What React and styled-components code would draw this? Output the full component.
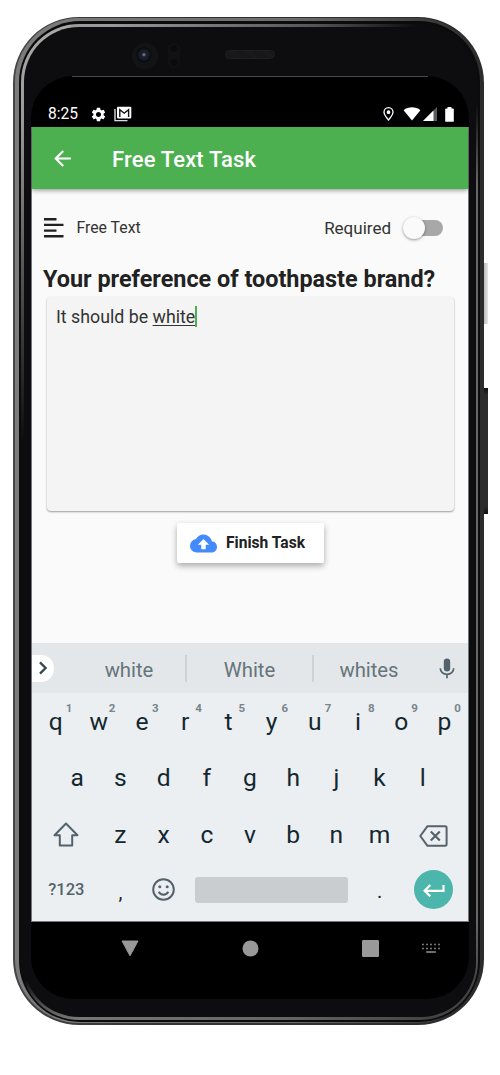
import React from "react";
import styled, { createGlobalStyle } from "styled-components";
import { MdSettings, MdArrowBack, MdBackup } from "react-icons/md";

const GlobalStyle = createGlobalStyle`
  * { box-sizing: border-box; }
  body { margin: 0; background: #fff; font-family: Roboto, "Liberation Sans", sans-serif; }
  svg { display: block; flex: none; }
`;

const Stage = styled.main`
  display: flex;
  align-items: flex-start;
  width: 500px;
  height: 1075px;
  padding: 17px 0 0 13px;
  overflow: hidden;
`;

/* Phone body: concentric shells from the outer rim to the glass */
const Rim = styled.div`
  width: 471px;
  height: 1008px;
  padding: 1px 3px 2px 2px;
  border-radius: 66px;
  background: linear-gradient(to right, #454545, #333 30%, #2c2c2c);
`;
const Metal = styled.div`
  height: 100%;
  padding: 3px 1px 1px 4px;
  border-radius: 64px;
  background: linear-gradient(to right, #7c7c7c, #6c6c6c 60%, #2c2c2c 99%);
`;
const Groove = styled.div`
  height: 100%;
  padding: 3px 2px 2px;
  border-radius: 61px;
  background: #0b0b0b;
`;
const Bevel = styled.div`
  height: 100%;
  padding: 3px 2px 3px 3px;
  border-radius: 58px;
  background:
    linear-gradient(to right, #999 0 10%, #555 60%, #0d0d0f 85%) 50px 0 / 407px 3px no-repeat,
    linear-gradient(to right, #777, #666 60%, #444) 50px 100% / 357px 3px no-repeat,
    linear-gradient(#0d0d0f, #0d0d0f 8%, #666 16%, #666 90%, #444 96%, #444) 100% 0 / 50% 100% no-repeat,
    linear-gradient(#aaa, #999 10%, #555 25%, #0d0d0f 42%, #0d0d0f 96%, #777) 0 0 / 50% 100% no-repeat;
`;
const Glass = styled.div`
  display: flex;
  flex-direction: column;
  height: 100%;
  padding: 0 7px 17px;
  border-radius: 55px;
  background: #0d0d0f;
`;
const SensorBar = styled.div`
  display: flex;
  align-items: center;
  height: 49px;
  padding: 8px 0 0 101px;
`;
const Camera = styled.div`
  width: 26px;
  height: 26px;
  border-radius: 50%;
  background: radial-gradient(circle at 46% 45%, #80808a 0 0.5px, #1f2230 2px, #171924 5px, #0a0a0c 7px, #131315 8px);
`;
const Proximity = styled.div`
  width: 12px;
  height: 25px;
  margin-left: 10px;
  border-radius: 6px;
  background:
    radial-gradient(circle at 50% 22%, #0b0b0c 3px, transparent 4px),
    radial-gradient(circle at 50% 78%, #0b0b0c 3px, transparent 4px),
    #111113;
`;
const Speaker = styled.div`
  width: 50px;
  height: 9px;
  margin: -2px 0 0 45px;
  border: 1px solid #1f1f21;
  border-radius: 5px;
  background: repeating-linear-gradient(45deg, #151515 0 1px, #1b1b1b 1px 2px);
`;
const SideKeys = styled.div`
  display: flex;
  flex-direction: column;
  gap: 64px;
  width: 4px;
  padding-top: 246px;
`;
const SideKey = styled.div`
  height: ${(p) => p.$height}px;
  background: ${(p) => p.$fill};
`;

const Screen = styled.div`
  display: flex;
  flex-direction: column;
  height: 923px;
  border-radius: 42px;
  overflow: hidden;
  background: linear-gradient(#4a4a4a, #4a4a4a) 41px 0 / 356px 1px no-repeat, #000;
`;
const StatusBar = styled.div`
  display: flex;
  align-items: flex-end;
  height: 51px;
  padding: 0 15px 4px 17px;
  color: #fff;
`;
const Clock = styled.span`
  width: 42px;
  font-size: 15.6px;
  line-height: 17px;
`;
const StatusIcons = styled.div`
  display: flex;
  align-items: center;
  height: 18px;
  gap: ${(p) => p.$gap}px;
  margin-left: ${(p) => (p.$end ? "auto" : 0)};
`;

const Window = styled.div`
  display: flex;
  flex-direction: column;
  height: 795px;
  border: solid #777;
  border-width: 0 1px 1px;
`;
const AppBar = styled.header`
  display: flex;
  align-items: center;
  height: 62px;
  flex: none;
  padding: 1px 0 0 18px;
  gap: 37px;
  color: #fff;
  background: #4caf50;
  box-shadow: 0 1px 5px rgba(0, 0, 0, 0.45);
  z-index: 1;
`;
const Title = styled.h1`
  margin: 0;
  padding-top: 1px;
  font-size: 22px;
  font-weight: 500;
  letter-spacing: 0.15px;
`;
const Content = styled.section`
  flex: 1;
  padding: 26px 14px 0 11px;
  background: #fafafa;
`;
const TaskRow = styled.div`
  display: flex;
  align-items: center;
  height: 25px;
  color: #333;
`;
const Label = styled.span`
  font-size: ${(p) => p.$size}px;
  line-height: 24px;
  margin-left: ${(p) => p.$left};
`;
const Switch = styled.div`
  display: flex;
  align-items: center;
  width: 32px;
  height: 16px;
  margin: 0 11px 0 20px;
  border-radius: 8px;
  background: #a8a8a8;
`;
const Thumb = styled.div`
  width: 22px;
  height: 22px;
  flex: none;
  margin-left: -8px;
  border-radius: 50%;
  background: #fafafa;
  box-shadow: 0 1px 3px rgba(0, 0, 0, 0.4);
`;
const Question = styled.h2`
  margin: 24px 0 0;
  font-size: 23.4px;
  line-height: 30px;
  font-weight: 700;
  color: #212121;
  white-space: nowrap;
`;
const Answer = styled.div`
  display: flex;
  align-items: flex-start;
  width: 407px;
  height: 214px;
  margin: 3px 0 0 4px;
  padding: 9px;
  border-radius: 4px;
  background: #f4f4f4;
  box-shadow: 0 1px 2px rgba(0, 0, 0, 0.38);
  font-size: 17.8px;
  line-height: 22px;
  color: #333;
`;
const Composing = styled.span`
  text-decoration: underline;
  text-decoration-thickness: 1px;
  text-underline-offset: 2px;
`;
const Caret = styled.span`
  width: 2px;
  height: 21px;
  background: #4caf50;
`;
const FinishButton = styled.button`
  display: flex;
  align-items: center;
  gap: 9px;
  width: 147px;
  height: 40px;
  margin: 12px 0 0 134px;
  padding: 0 0 0 13px;
  border: 0;
  border-radius: 2px;
  background: #fff;
  box-shadow: 0 3px 6px rgba(0, 0, 0, 0.32);
  font: 700 15.6px Roboto, sans-serif;
  color: #212121;
  white-space: nowrap;
`;

const Suggestions = styled.div`
  display: flex;
  align-items: center;
  height: 50px;
  flex: none;
  background: #e3e7ea;
`;
const Expand = styled.div`
  display: flex;
  align-items: center;
  width: 22px;
  height: 27px;
  margin-right: 19px;
  padding-left: 7px;
  border-radius: 0 13px 13px 0;
  background: #fff;
`;
const Suggestion = styled.div`
  width: ${(p) => p.$width}px;
  height: 27px;
  border-left: ${(p) => (p.$divided ? "2px solid #cdd2d5" : 0)};
  font-size: 20.3px;
  line-height: 30px;
  text-align: center;
  color: #66747b;
`;
const Keyboard = styled.div`
  flex: none;
  height: 228px;
  background: #ebeff2;
`;
const KeyRow = styled.div`
  display: flex;
  justify-content: center;
  height: ${(p) => p.$height || 56}px;
`;
const Key = styled.div`
  position: relative;
  display: flex;
  align-items: center;
  justify-content: center;
  width: ${(p) => (p.$units || 1) * 43.2}px;
  padding-top: ${(p) => p.$drop || 0}px;
  font-size: ${(p) => p.$size || 24.6}px;
  font-weight: ${(p) => (p.$muted ? 500 : 400)};
  color: ${(p) => (p.$muted ? "#53636b" : "#14272f")};
`;
const Hint = styled.sup`
  position: absolute;
  top: 9px;
  right: 5px;
  font-size: 11.5px;
  line-height: 13px;
  font-weight: 700;
  color: #78858b;
`;
const SpaceBar = styled.div`
  width: 152.8px;
  height: 26px;
  margin: 15px 10px 0;
  border-radius: 3px;
  background: #c9cdd0;
`;
const Enter = styled.div`
  display: flex;
  align-items: center;
  justify-content: center;
  width: 39px;
  height: 39px;
  border-radius: 50%;
  background: #4db6ac;
`;
const NavBar = styled.nav`
  display: flex;
  align-items: center;
  height: 53px;
  padding-left: 90px;
`;
const Offset = styled.div`
  margin-left: ${(p) => p.$left}px;
`;

const TextIcon = () => (
  <svg width="21" height="21" viewBox="0 0 21 21" stroke="#212121" strokeWidth="2.4">
    <path d="M1 2.2h12.5M1 7.9h19.5M1 13.6h12.5M1 19.2h19.5" />
  </svg>
);
const MailIcon = () => (
  <svg width="18" height="16" viewBox="0 0 18 16" fill="none">
    <path d="M1 3v11.6h12.5" stroke="#ddd" strokeWidth="1.4" />
    <rect x="3" y="0.8" width="14.3" height="11.6" rx="1" fill="#fff" />
    <path d="M5.8 11V3.8l4.4 3.4 4.4-3.4V11" stroke="#111" strokeWidth="1.4" />
  </svg>
);
const PinIcon = () => (
  <svg width="11" height="14" viewBox="0 0 11 14" fill="none" stroke="#fff" strokeWidth="1.3">
    <path d="M5.5 13C3 10 1 7.500 1 5.200a4.500 4.500 0 0 1 9 0C10 7.500 8 10 5.500 13z" />
    <circle cx="5.5" cy="5.200" r="1.200" fill="#fff" />
  </svg>
);
const WifiIcon = () => (
  <svg width="18" height="14" viewBox="0 0 18 14">
    <path d="M9 13.5.6 3.2C3 1.2 6 .3 9 .3s6 .9 8.400 2.900z" fill="#fff" />
  </svg>
);
const SignalIcon = () => (
  <svg width="14" height="14" viewBox="0 0 14 14">
    <path d="M0 14 14 0v14z" fill="#5c5c5c" />
    <path d="M0 14 10.500 3.500V14z" fill="#fff" />
  </svg>
);
const BatteryIcon = () => (
  <svg width="9" height="15" viewBox="0 0 9 15" fill="#fff">
    <rect x="2.500" y="0" width="4" height="3" />
    <rect x="0.200" y="1.400" width="8.600" height="13.400" rx="0.900" />
  </svg>
);
const ChevronIcon = () => (
  <svg width="9" height="14" viewBox="0 0 9 14" fill="none" stroke="#37474f" strokeWidth="2.3">
    <path d="M1 1.400 6.600 7 1 12.600" />
  </svg>
);
const MicIcon = () => (
  <svg width="16" height="21" viewBox="0 0 16 21" fill="none" stroke="#53636b" strokeWidth="1.700">
    <rect x="4.800" y="0.500" width="6.400" height="13" rx="3.200" fill="#53636b" stroke="none" />
    <path d="M1.300 10.300c0 3.600 3 6 6.700 6s6.700-2.400 6.700-6M8 16.300v4" />
  </svg>
);
const ShiftIcon = () => (
  <svg width="26" height="25" viewBox="0 0 26 25" fill="none" stroke="#53636b" strokeWidth="2" strokeLinejoin="round">
    <path d="M13 1.500 1.500 13.200H6.800V23.500H19.200V13.200H24.500z" />
  </svg>
);
const BackspaceIcon = () => (
  <svg width="29" height="22" viewBox="0 0 29 22" fill="none" stroke="#53636b" strokeWidth="2" strokeLinejoin="round">
    <path d="M8.500 1.200H26.200a1.400 1.400 0 0 1 1.400 1.400V19.400a1.400 1.400 0 0 1-1.400 1.400H8.500L1.300 11z" />
    <path d="M11.800 6.500l9 9M20.800 6.500l-9 9" strokeWidth="2.200" />
  </svg>
);
const SmileyIcon = () => (
  <svg width="23" height="23" viewBox="0 0 23 23" fill="none" stroke="#53636b" strokeWidth="2">
    <circle cx="11.500" cy="11.500" r="10.300" />
    <path d="M6.700 13.800c1 2 2.800 2.900 4.800 2.900s3.800-.9 4.800-2.900" />
    <circle cx="7.800" cy="8.800" r="1.500" fill="#53636b" stroke="none" />
    <circle cx="15.200" cy="8.800" r="1.500" fill="#53636b" stroke="none" />
  </svg>
);
const ReturnIcon = () => (
  <svg width="22" height="14" viewBox="0 0 22 14" fill="none" stroke="#fff" strokeWidth="2.200">
    <path d="M20.500 2v5.800H1.800M7.300 2 1.600 7.800l5.700 5.600" />
  </svg>
);
const BackTriangle = () => (
  <svg width="18" height="17" viewBox="0 0 18 17">
    <path d="M1 1h16L9 15.800z" fill="#999" stroke="#999" strokeLinejoin="round" />
  </svg>
);
const HomeCircle = () => (
  <svg width="17" height="17" viewBox="0 0 17 17">
    <circle cx="8.500" cy="8.500" r="8" fill="#999" />
  </svg>
);
const RecentSquare = () => (
  <svg width="17" height="17" viewBox="0 0 17 17">
    <rect width="17" height="17" rx="1.200" fill="#999" />
  </svg>
);
const KeyboardDots = () => (
  <svg width="18" height="11" viewBox="0 0 18 11" fill="#8c8c8c">
    {[0.200, 4.200, 8.200, 12.200, 16.200].map((x) => (
      <React.Fragment key={x}>
        <rect x={x} y="0.700" width="1.600" height="1.600" />
        <rect x={x} y="4.700" width="1.600" height="1.600" />
      </React.Fragment>
    ))}
    <rect x="4.200" y="8.200" width="9.600" height="1.600" />
  </svg>
);

export default function App() {
  return (
    <>
      <GlobalStyle />
      <Stage>
        <Rim>
          <Metal>
            <Groove>
              <Bevel>
                <Glass>
                  <SensorBar>
                    <Camera />
                    <Proximity />
                    <Speaker />
                  </SensorBar>
                  <Screen>
                    <StatusBar>
                      <Clock>8:25</Clock>
                      <StatusIcons $gap={7}>
                        <MdSettings size={17} />
                        <MailIcon />
                      </StatusIcons>
                      <StatusIcons $gap={2} $end>
                        <PinIcon />
                        <Offset $left={7}><WifiIcon /></Offset>
                        <SignalIcon />
                        <Offset $left={6}><BatteryIcon /></Offset>
                      </StatusIcons>
                    </StatusBar>
                    <Window>
                      <AppBar>
                        <MdArrowBack size={25} />
                        <Title>Free Text Task</Title>
                      </AppBar>
                      <Content>
                        <TaskRow>
                          <TextIcon />
                          <Label $size={15.8} $left="12.500px">Free Text</Label>
                          <Label $size={17} $left="auto">Required</Label>
                          <Switch><Thumb /></Switch>
                        </TaskRow>
                        <Question>Your preference of toothpaste brand?</Question>
                        <Answer>
                          <span>It should be <Composing>white</Composing></span>
                          <Caret />
                        </Answer>
                        <FinishButton>
                          <MdBackup size={27} color="#448aff" />
                          Finish Task
                        </FinishButton>
                      </Content>
                      <Suggestions>
                        <Expand><ChevronIcon /></Expand>
                        <Suggestion $width={112}>white</Suggestion>
                        <Suggestion $width={127} $divided>White</Suggestion>
                        <Suggestion $width={112} $divided>whites</Suggestion>
                        <Offset $left={15}><MicIcon /></Offset>
                      </Suggestions>
                      <Keyboard>
                        <KeyRow>
                          {[..."qwertyuiop"].map((c, i) => (
                            <Key key={c}>{c}<Hint>{(i + 1) % 10}</Hint></Key>
                          ))}
                        </KeyRow>
                        <KeyRow $height={57}>
                          {[..."asdfghjkl"].map((c) => <Key key={c}>{c}</Key>)}
                        </KeyRow>
                        <KeyRow>
                          <Key $units={1.5}><ShiftIcon /></Key>
                          {[..."zxcvbnm"].map((c) => <Key key={c}>{c}</Key>)}
                          <Key $units={1.5} $drop={3}><BackspaceIcon /></Key>
                        </KeyRow>
                        <KeyRow $height={55}>
                          <Key $units={1.5} $size={16.500} $muted>?123</Key>
                          <Key $size={20} $drop={5}>,</Key>
                          <Key><SmileyIcon /></Key>
                          <SpaceBar />
                          <Key $size={20} $drop={3}>.</Key>
                          <Key $units={1.5}><Enter><ReturnIcon /></Enter></Key>
                        </KeyRow>
                      </Keyboard>
                    </Window>
                    <NavBar>
                      <BackTriangle />
                      <Offset $left={103}><HomeCircle /></Offset>
                      <Offset $left={103}><RecentSquare /></Offset>
                      <Offset $left={43}><KeyboardDots /></Offset>
                    </NavBar>
                  </Screen>
                </Glass>
              </Bevel>
            </Groove>
          </Metal>
        </Rim>
        <SideKeys>
          <SideKey $height={61} $fill="linear-gradient(to right, #bbb, #e6e6e6)" />
          <SideKey $height={126} $fill="linear-gradient(#111, #2c2c2c 6%, #2c2c2c 94%, #111)" />
        </SideKeys>
      </Stage>
    </>
  );
}
